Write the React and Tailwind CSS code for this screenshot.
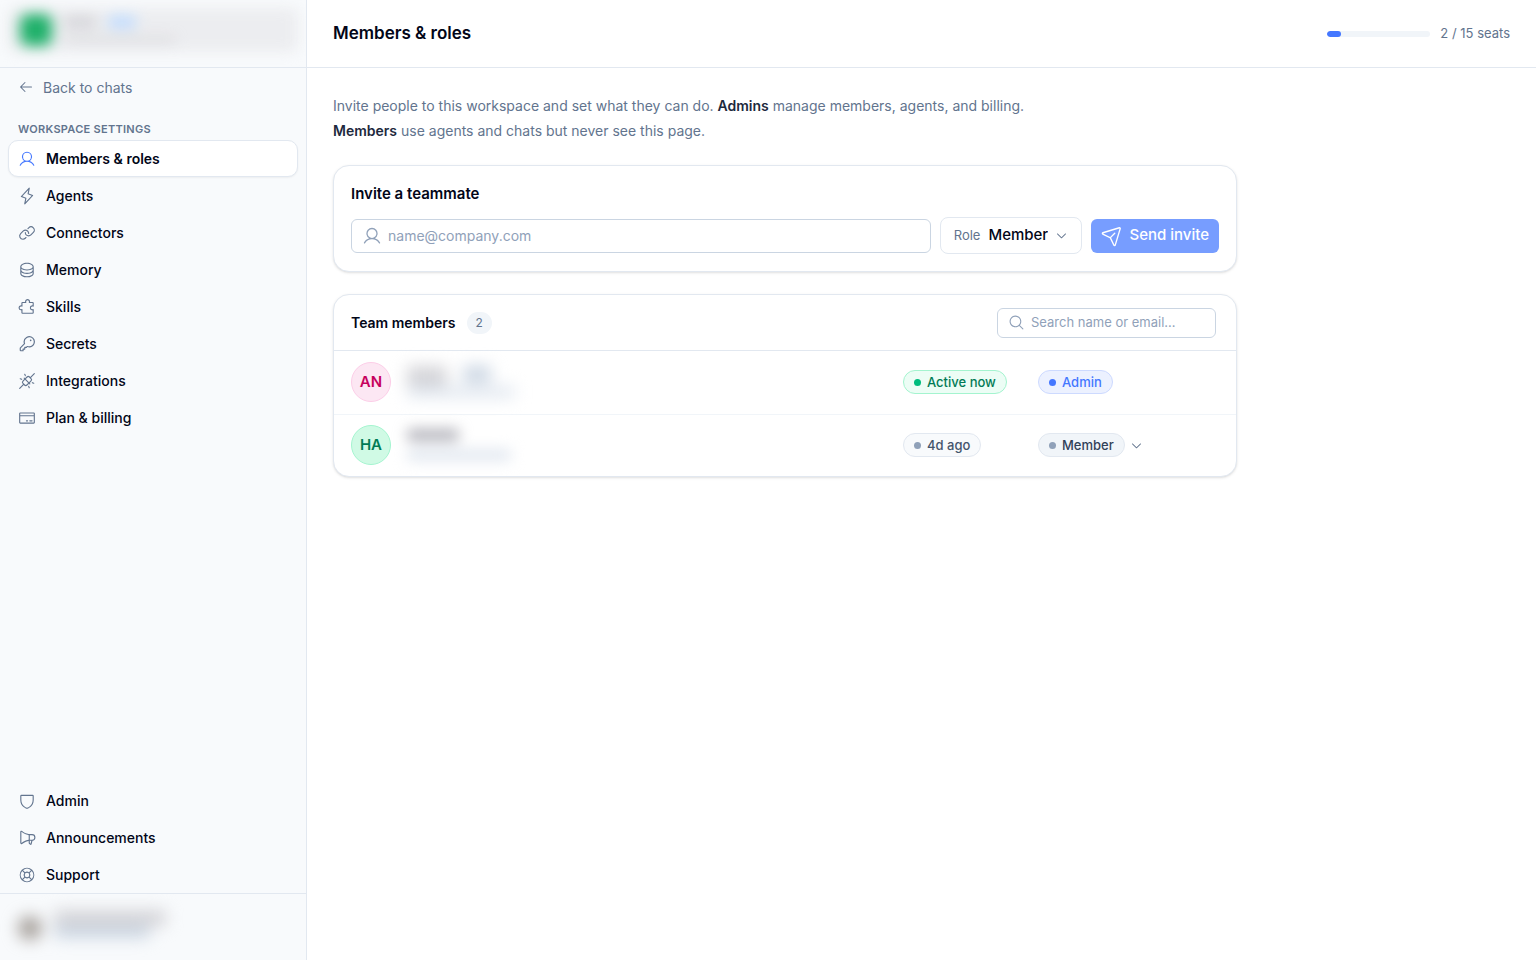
import React, { useState } from 'react';
import {
  PiArrowLeft,
  PiCaretDown,
  PiCreditCard,
  PiDatabase,
  PiKey,
  PiLifebuoy,
  PiLightning,
  PiLink,
  PiMagnifyingGlass,
  PiMegaphone,
  PiPaperPlaneTilt,
  PiPlugsConnected,
  PiPuzzlePiece,
  PiShield,
  PiUser,
} from 'react-icons/pi';

const SETTINGS_NAV = [
  { label: 'Members & roles', icon: PiUser, active: true },
  { label: 'Agents', icon: PiLightning },
  { label: 'Connectors', icon: PiLink },
  { label: 'Memory', icon: PiDatabase },
  { label: 'Skills', icon: PiPuzzlePiece },
  { label: 'Secrets', icon: PiKey },
  { label: 'Integrations', icon: PiPlugsConnected },
  { label: 'Plan & billing', icon: PiCreditCard },
];

const FOOTER_NAV = [
  { label: 'Admin', icon: PiShield },
  { label: 'Announcements', icon: PiMegaphone },
  { label: 'Support', icon: PiLifebuoy },
];

const SEATS = { used: 2, total: 15 };

function NavItem({ item }) {
  const Icon = item.icon;
  return (
    <li>
      <a
        href="#"
        aria-current={item.active ? 'page' : undefined}
        className={`flex h-[37px] items-center gap-[10px] rounded-[10px] border px-[9px] text-[14px] text-slate-950 ${
          item.active ? 'border-slate-200 bg-white font-semibold shadow-xs' : 'border-transparent font-medium'
        }`}
      >
        <Icon size={18} className={`shrink-0 ${item.active ? 'text-[#4477ff]' : 'text-slate-500'}`} />
        {item.label}
      </a>
    </li>
  );
}

function Sidebar() {
  return (
    <aside className="flex w-[307px] shrink-0 flex-col border-r border-slate-200 bg-slate-50">
      {/* Workspace */}
      <div className="h-[68px] shrink-0 overflow-hidden border-b border-slate-200 p-2">
        <div className="flex h-11 items-center gap-3 rounded-lg bg-zinc-200/60 px-3 blur-[7px]" aria-hidden="true">
          <div className="size-8 rounded-lg bg-[#1fb06a]" />
          <div className="flex flex-col gap-2">
            <div className="flex gap-3">
              <div className="h-3 w-8 rounded bg-zinc-300" />
              <div className="h-3 w-7 rounded bg-blue-200" />
            </div>
            <div className="h-2 w-28 rounded bg-zinc-300/60" />
          </div>
        </div>
      </div>

      <a href="#" className="flex h-[38px] items-center gap-[9px] px-[18px] text-[14px] text-slate-500">
        <PiArrowLeft size={16} />
        Back to chats
      </a>

      <nav className="flex flex-1 flex-col justify-between px-2">
        <div>
          <h2 className="px-[10px] pt-[15px] pb-[2px] text-[11px] leading-[17px] font-semibold tracking-wide text-slate-500 uppercase">
            Workspace settings
          </h2>
          <ul>
            {SETTINGS_NAV.map((item) => (
              <NavItem key={item.label} item={item} />
            ))}
          </ul>
        </div>
        <ul>
          {FOOTER_NAV.map((item) => (
            <NavItem key={item.label} item={item} />
          ))}
        </ul>
      </nav>

      {/* Account */}
      <div className="h-[67px] shrink-0 overflow-hidden border-t border-slate-200 px-[18px] py-[14px]">
        <div className="flex items-center gap-3 blur-[8px]" aria-hidden="true">
          <div className="mt-2 size-6 rounded-full bg-stone-400" />
          <div className="flex flex-col">
            <div className="h-4 w-28 rounded bg-zinc-300" />
            <div className="h-3 w-24 rounded bg-slate-300" />
          </div>
        </div>
      </div>
    </aside>
  );
}

function Header() {
  return (
    <header className="flex h-[68px] shrink-0 items-center justify-between border-b border-slate-200 px-[26px]">
      <h1 className="text-[17px] font-semibold text-slate-950">Members &amp; roles</h1>
      <div className="flex items-center gap-[10px]">
        <div className="h-[6px] w-[103px] overflow-hidden rounded-full bg-slate-100">
          <div
            className="h-full rounded-full bg-[#4477ff]"
            style={{ width: `${(SEATS.used / SEATS.total) * 100}%` }}
          />
        </div>
        <span className="text-[13px] text-slate-500">
          {SEATS.used} / {SEATS.total} seats
        </span>
      </div>
    </header>
  );
}

function InviteCard() {
  const [email, setEmail] = useState('');

  return (
    <section className="rounded-2xl border border-slate-200 bg-white p-[17px] shadow-sm">
      <h2 className="text-[15px] leading-[22px] font-semibold text-slate-950">Invite a teammate</h2>
      <form className="mt-3 flex items-center gap-[9px]" onSubmit={(e) => e.preventDefault()}>
        <label className="flex h-[34px] flex-1 items-center gap-[6px] rounded-md border border-slate-300 px-[10px]">
          <PiUser size={20} className="shrink-0 text-slate-400" />
          <input
            type="email"
            aria-label="Email address"
            value={email}
            onChange={(e) => setEmail(e.target.value)}
            placeholder="name@company.com"
            className="w-full text-[14px] outline-none placeholder:text-slate-400"
          />
        </label>
        <label className="relative flex h-[37px] items-center gap-2 rounded-lg border border-slate-200 pl-[13px] text-[13px] text-slate-500">
          Role
          <select
            defaultValue="Member"
            className="h-full appearance-none pr-[33px] text-[15px] font-medium text-slate-950 outline-none"
          >
            <option>Member</option>
            <option>Admin</option>
          </select>
          <PiCaretDown size={13} className="pointer-events-none absolute right-[13px] text-slate-500" />
        </label>
        <button
          type="submit"
          className="flex h-[34px] items-center gap-[6px] rounded-md bg-[#779dff] px-[10px] text-[15px] font-medium text-white"
        >
          <PiPaperPlaneTilt size={22} />
          Send invite
        </button>
      </form>
    </section>
  );
}

function Pill({ dot, className, children }) {
  return (
    <span className={`flex h-6 w-fit items-center gap-[6px] rounded-full border px-[10px] text-[13px] font-medium ${className}`}>
      <span className={`size-[7px] rounded-full ${dot}`} />
      {children}
    </span>
  );
}

function Avatar({ initials, className }) {
  return (
    <span className={`flex size-10 items-center justify-center rounded-full border text-[15px] font-semibold ${className}`}>
      {initials}
    </span>
  );
}

function MembersCard() {
  return (
    <section className="overflow-hidden rounded-2xl border border-slate-200 bg-white shadow-sm">
      <div className="flex h-14 items-center gap-[11px] border-b border-slate-200 pr-5 pl-[17px]">
        <h2 className="text-[14px] font-semibold text-slate-950">Team members</h2>
        <span className="flex h-[22px] items-center rounded-full bg-slate-100 px-[9px] text-[12px] text-slate-500">2</span>
        <label className="ml-auto flex h-[30px] w-[219px] items-center gap-[6px] rounded-md border border-slate-300 px-[10px]">
          <PiMagnifyingGlass size={17} className="shrink-0 text-slate-400" />
          <input
            type="search"
            aria-label="Search members"
            placeholder="Search name or email…"
            className="w-full text-[13px] outline-none placeholder:text-slate-400"
          />
        </label>
      </div>
      <table className="w-full table-fixed text-left">
        <colgroup>
          <col />
          <col className="w-[135px]" />
          <col className="w-[198px]" />
        </colgroup>
        <tbody>
          <tr className="h-[63px] border-b border-slate-100">
            <td className="pl-[17px]">
              <div className="flex items-center gap-4">
                <Avatar initials="AN" className="border-pink-200 bg-pink-100 text-pink-700" />
                <div className="flex flex-col blur-[8px]" aria-hidden="true">
                  <div className="flex gap-4">
                    <div className="h-5 w-10 rounded bg-zinc-300" />
                    <div className="h-4 w-7 rounded bg-slate-300" />
                  </div>
                  <div className="h-3 w-27 rounded bg-slate-200" />
                </div>
              </div>
            </td>
            <td>
              <Pill dot="bg-emerald-500" className="border-emerald-200 bg-emerald-50 text-emerald-700">Active now</Pill>
            </td>
            <td>
              <Pill dot="bg-[#4477ff]" className="border-[#cddaff] bg-[#ecf1ff] text-[#4477ff]">Admin</Pill>
            </td>
          </tr>
          <tr className="h-[62px]">
            <td className="pl-[17px]">
              <div className="flex items-center gap-4">
                <Avatar initials="HA" className="border-emerald-200 bg-emerald-100 text-emerald-700" />
                <div className="flex flex-col gap-2 blur-[7px]" aria-hidden="true">
                  <div className="h-3 w-13 rounded bg-zinc-400/80" />
                  <div className="h-3 w-26 rounded bg-slate-200" />
                </div>
              </div>
            </td>
            <td>
              <Pill dot="bg-slate-400" className="border-slate-200 bg-slate-50 text-slate-600">4d ago</Pill>
            </td>
            <td>
              <button type="button" className="flex items-center gap-[5px] text-slate-500">
                <Pill dot="bg-slate-400" className="border-slate-200 bg-slate-100 text-slate-700">Member</Pill>
                <PiCaretDown size={13} />
              </button>
            </td>
          </tr>
        </tbody>
      </table>
    </section>
  );
}

export default function App() {
  return (
    <div className="flex min-h-screen bg-white font-['Inter',sans-serif]">
      <Sidebar />
      <div className="flex min-w-0 flex-1 flex-col">
        <Header />
        <main className="flex w-full max-w-[956px] flex-col gap-[22px] px-[26px] pt-[25px]">
          <p className="max-w-[736px] text-[14px] leading-[25px] text-slate-500">
            Invite people to this workspace and set what they can do.{' '}
            <strong className="font-semibold text-slate-800">Admins</strong> manage members, agents, and billing.{' '}
            <strong className="font-semibold text-slate-800">Members</strong> use agents and chats but never see this page.
          </p>
          <InviteCard />
          <MembersCard />
        </main>
      </div>
    </div>
  );
}
